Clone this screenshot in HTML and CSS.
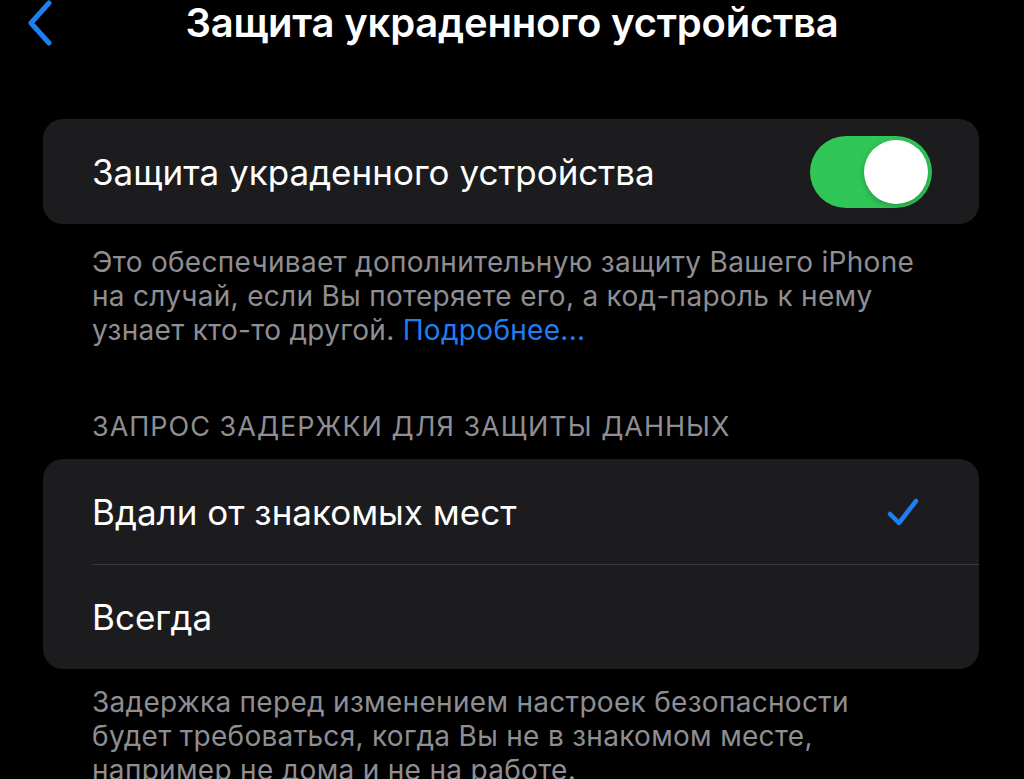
FILE: index.html
```html
<!DOCTYPE html>
<html lang="ru">
<head>
  <meta charset="UTF-8">
  <title>Защита украденного устройства</title>
  <link rel="stylesheet" href="styles.css">
</head>
<body>
  <header class="nav">
    <a class="back" href="#">
      <svg width="28" height="46" viewBox="0 0 28 46">
        <path d="M23 3 L5 23 L23 43" fill="none" stroke="#1f7ff2" stroke-width="5" stroke-linecap="round" stroke-linejoin="round"/>
      </svg>
    </a>
    <h1 class="nav-title">Защита украденного устройства</h1>
  </header>

  <main class="content">
    <!-- Main switch -->
    <section class="group">
      <div class="row">
        <span class="row-label">Защита украденного устройства</span>
        <label class="switch">
          <input type="checkbox" checked>
          <span class="track"><span class="knob"></span></span>
        </label>
      </div>
    </section>
    <p class="footnote">
      Это обеспечивает дополнительную защиту Вашего iPhone<br>
      на случай, если Вы потеряете его, а код-пароль к нему<br>
      узнает кто-то другой. <a href="#" class="link">Подробнее...</a>
    </p>

    <!-- Delay options -->
    <h2 class="section-title">Запрос задержки для защиты данных</h2>
    <section class="group">
      <div class="row">
        <span class="row-label">Вдали от знакомых мест</span>
        <svg class="check" width="34" height="30" viewBox="0 0 34 30">
          <path d="M4 17 L13 26 L30 4" fill="none" stroke="#1f7ff2" stroke-width="4.5" stroke-linecap="round" stroke-linejoin="round"/>
        </svg>
      </div>
      <div class="row">
        <span class="row-label">Всегда</span>
      </div>
    </section>
    <p class="footnote footnote-last">
      Задержка перед изменением настроек безопасности<br>
      будет требоваться, когда Вы не в знакомом месте,<br>
      например не дома и не на работе.
    </p>
  </main>
</body>
</html>
```

FILE: styles.css
```css
body {
  margin: 0;
  background: #000;
  color: #fff;
  font-family: Inter, "Noto Sans", sans-serif;
  overflow: hidden;
}

.nav {
  position: relative;
  height: 60px;
  display: flex;
  justify-content: center;
  align-items: flex-start;
}

.back {
  position: absolute;
  left: 26px;
  top: 0;
  display: block;
}

.nav-title {
  margin: 0;
  font-size: 40px;
  font-weight: 600;
  line-height: 46px;
  letter-spacing: -0.2px;
}

.content {
  padding: 59px 45px 0 43px;
}

.group {
  background: #1c1c1e;
  border-radius: 20px;
  overflow: hidden;
}

.row {
  height: 105px;
  display: flex;
  align-items: center;
  justify-content: space-between;
  padding: 0 47px 0 49px;
  position: relative;
}

.row + .row::before {
  content: "";
  position: absolute;
  top: 0;
  left: 49px;
  right: 0;
  height: 1px;
  background: #38383a;
}

.row-label {
  font-size: 35px;
}

.switch input {
  display: none;
}

.track {
  display: block;
  width: 122px;
  height: 72px;
  border-radius: 36px;
  background: #31c658;
  position: relative;
}

.knob {
  position: absolute;
  right: 4px;
  top: 4px;
  width: 64px;
  height: 64px;
  border-radius: 50%;
  background: #fff;
  box-shadow: 0 2px 6px rgba(0, 0, 0, 0.25);
}

.check {
  margin-right: 12px;
}

.footnote {
  margin: 21px 0 0;
  padding: 0 0 0 49px;
  color: #8e8e93;
  font-size: 28px;
  line-height: 34px;
  letter-spacing: 0.3px;
  white-space: nowrap;
}

.footnote-last {
  margin-top: 16px;
}

.link {
  color: #1f7ff2;
  text-decoration: none;
}

.section-title {
  margin: 65px 0 17px;
  padding-left: 49px;
  color: #8e8e93;
  font-size: 27px;
  font-weight: 400;
  line-height: 30px;
  text-transform: uppercase;
  letter-spacing: 1px;
}
```
